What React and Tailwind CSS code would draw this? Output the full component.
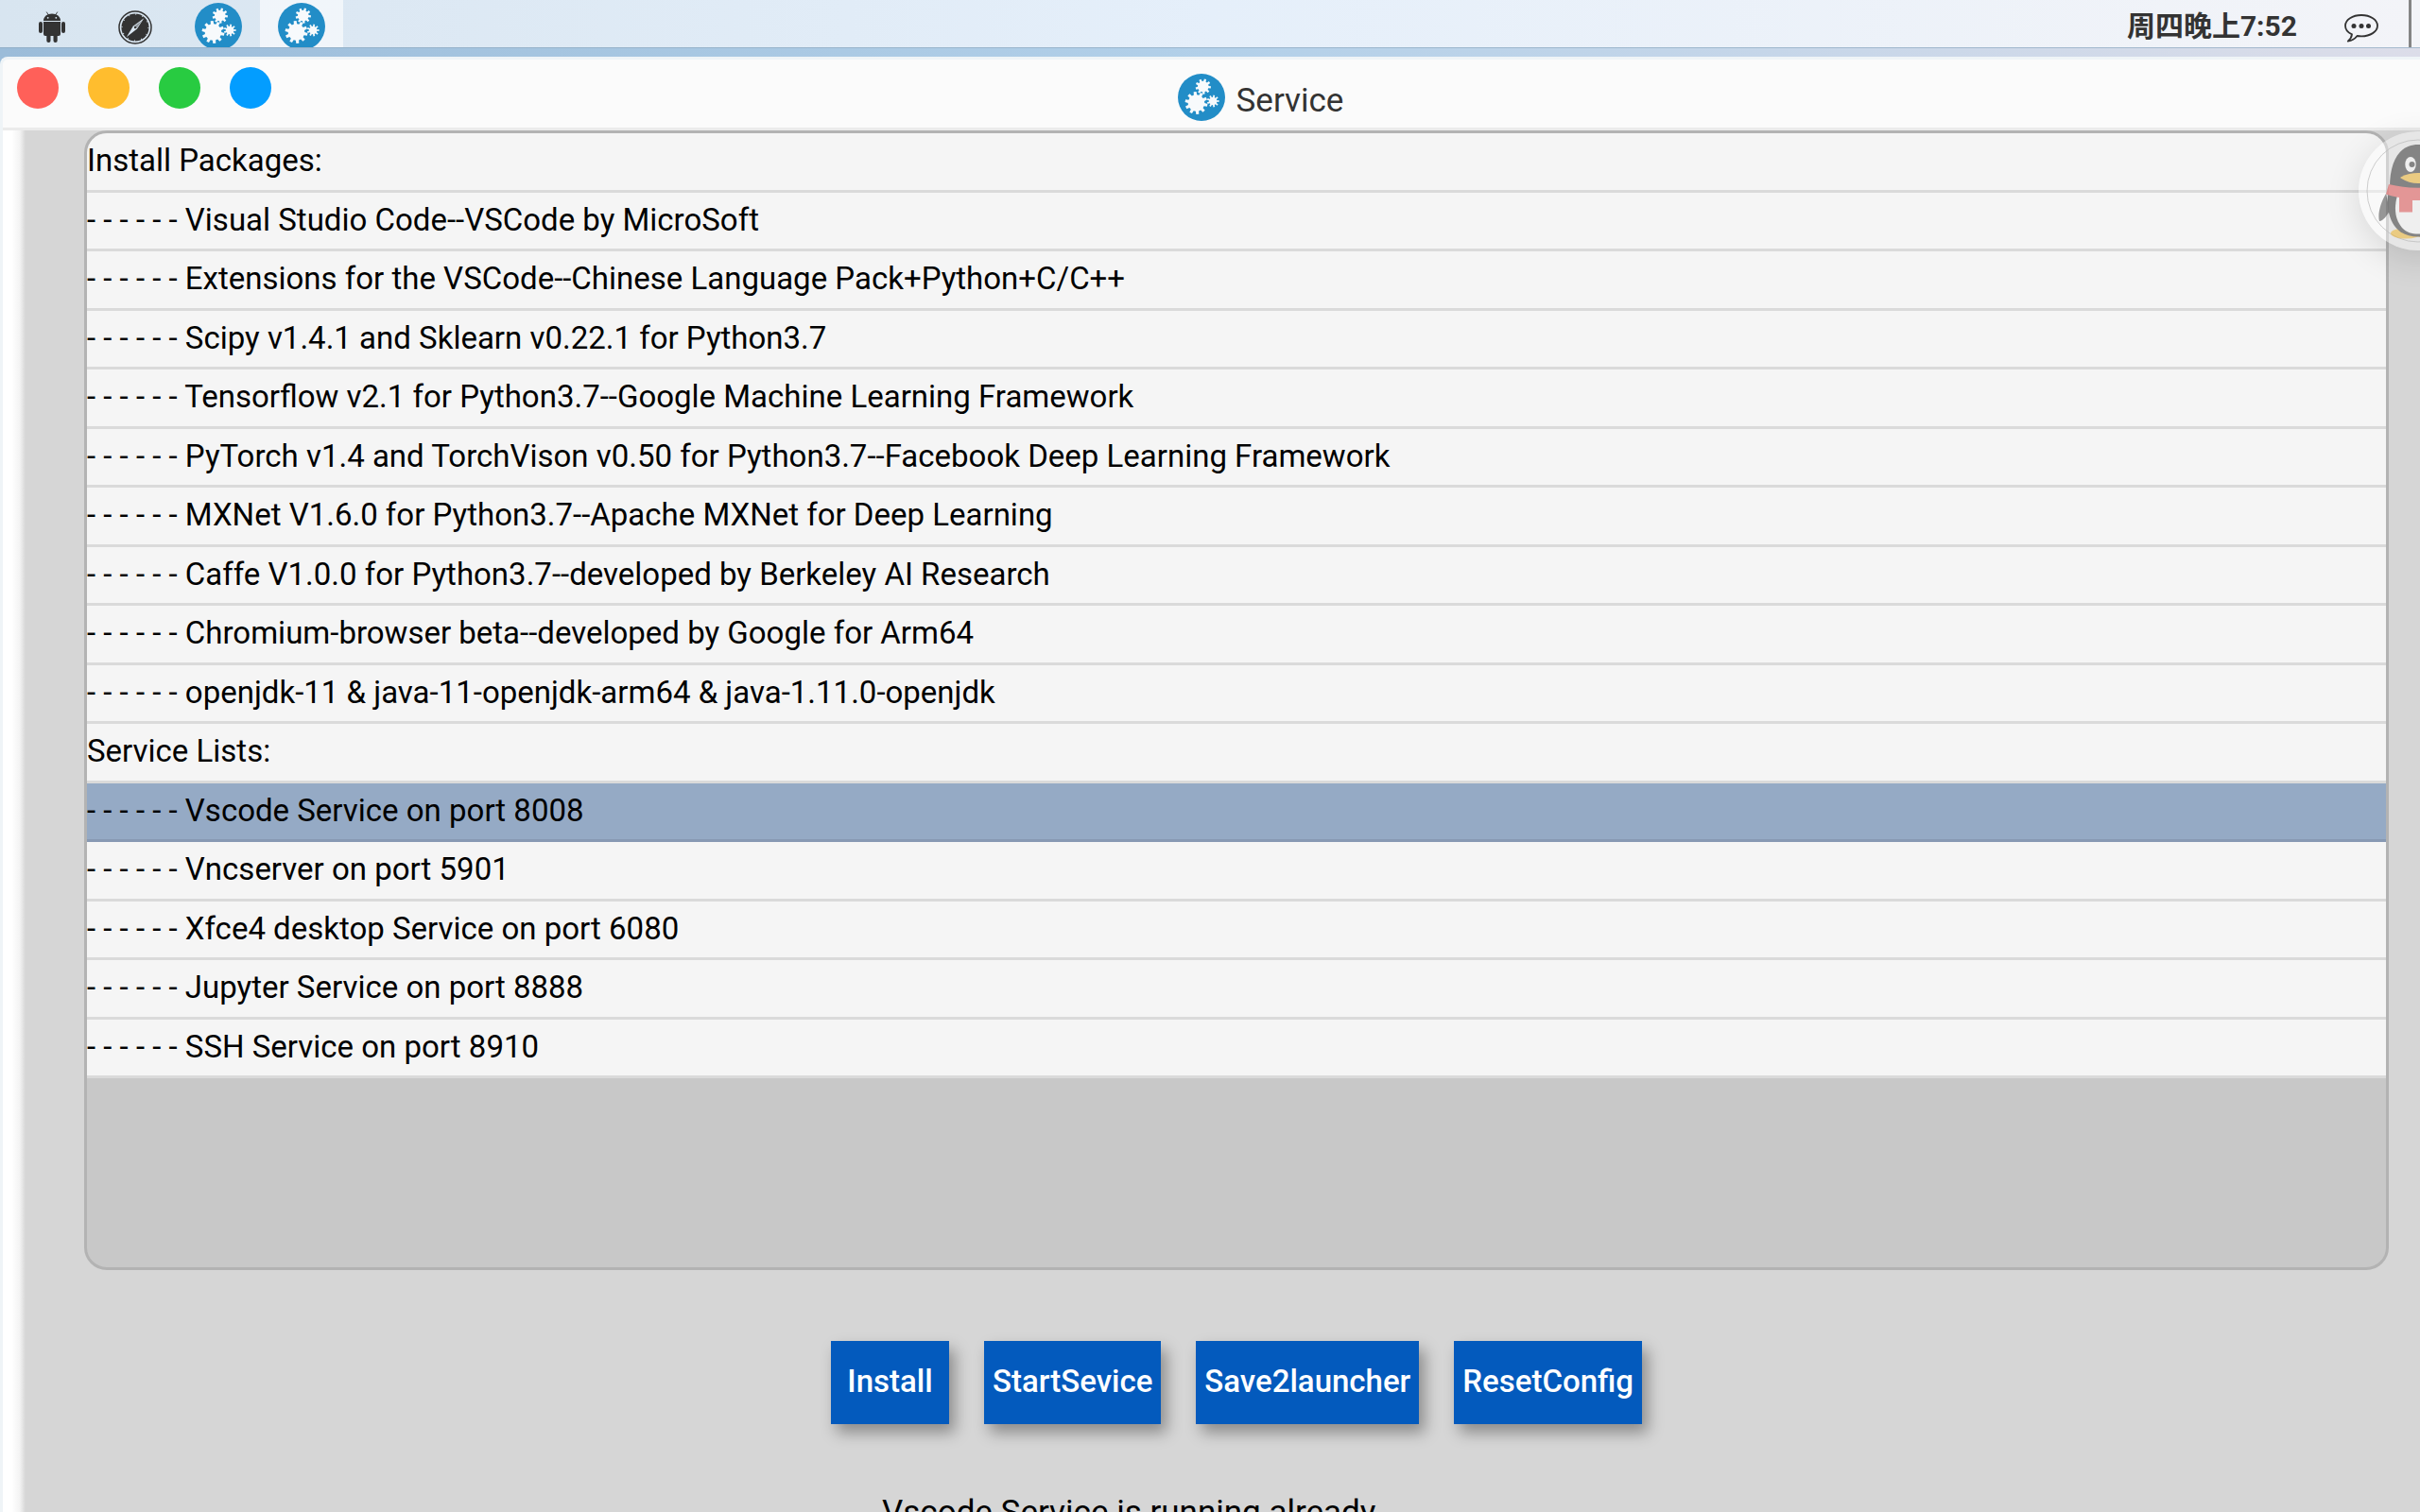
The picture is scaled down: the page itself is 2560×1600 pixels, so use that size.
const packages = [
  'Install Packages:',
  '- - - - - - Visual Studio Code--VSCode by MicroSoft',
  '- - - - - - Extensions for the VSCode--Chinese Language Pack+Python+C/C++',
  '- - - - - - Scipy v1.4.1 and Sklearn v0.22.1 for Python3.7',
  '- - - - - - Tensorflow v2.1 for Python3.7--Google Machine Learning Framework',
  '- - - - - - PyTorch v1.4 and TorchVison v0.50 for Python3.7--Facebook Deep Learning Framework',
  '- - - - - - MXNet V1.6.0 for Python3.7--Apache MXNet for Deep Learning',
  '- - - - - - Caffe V1.0.0 for Python3.7--developed by Berkeley AI Research',
  '- - - - - - Chromium-browser beta--developed by Google for Arm64',
  '- - - - - - openjdk-11 & java-11-openjdk-arm64 & java-1.11.0-openjdk',
  'Service Lists:',
  '- - - - - - Vscode Service on port 8008',
  '- - - - - - Vncserver on port 5901',
  '- - - - - - Xfce4 desktop Service on port 6080',
  '- - - - - - Jupyter Service on port 8888',
  '- - - - - - SSH Service on port 8910',
];
const selected = 11;

function gearPath(cx, cy, outer, inner, teeth, turn) {
  const step = (Math.PI * 2) / teeth;
  const points = [];
  for (let i = 0; i < teeth; i++) {
    const a = i * step + turn;
    [
      [inner, -0.3],
      [outer, -0.2],
      [outer, 0.2],
      [inner, 0.3],
    ].forEach(([r, f]) => {
      points.push(`${(cx + r * Math.cos(a + f * step)).toFixed(2)} ${(cy + r * Math.sin(a + f * step)).toFixed(2)}`);
    });
  }
  return `M${points.join('L')}Z`;
}

function GearsIcon() {
  return (
    <svg viewBox="0 0 50 50" className="size-[50px] shrink-0" aria-hidden="true">
      <circle cx="25" cy="25" r="25" fill="#228dc7" />
      <g fill="#f7fafc">
        <path d={gearPath(19.5, 31, 12, 8.8, 10, 0.2)} />
        <path d={gearPath(26.8, 13.6, 8.2, 5.8, 9, 0.1)} />
        <path d={gearPath(37.2, 29, 6.4, 4.2, 9, 0)} />
      </g>
    </svg>
  );
}

function AndroidIcon() {
  return (
    <svg viewBox="0 0 28 34" className="h-[34px] w-7" fill="#333" aria-hidden="true">
      <path d="M8.2.6 10.4 4M19.8.6 17.6 4" stroke="#333" strokeWidth=".9" />
      <path d="M5 10C5 5.6 8.8 2.6 14 2.6S23 5.6 23 10Z" />
      <circle cx="9.7" cy="6.8" r=".9" fill="#dbe7f2" />
      <circle cx="18.3" cy="6.8" r=".9" fill="#dbe7f2" />
      <path d="M5 11h18v13a2 2 0 0 1-2 2H7a2 2 0 0 1-2-2Z" />
      <rect x="0" y="11" width="4" height="12" rx="2" />
      <rect x="24" y="11" width="4" height="12" rx="2" />
      <rect x="8.3" y="24" width="4.2" height="9" rx="2" />
      <rect x="15.5" y="24" width="4.2" height="9" rx="2" />
    </svg>
  );
}

function CompassIcon() {
  return (
    <svg viewBox="0 0 36 36" className="size-9" aria-hidden="true">
      <circle cx="18" cy="18" r="17" fill="none" stroke="#333" strokeWidth="1.5" />
      <circle cx="18" cy="18" r="14.6" fill="#333" />
      <circle cx="18" cy="18" r="14" fill="none" stroke="#dbe7f2" strokeWidth="1.4" strokeDasharray="0.8 6.53" />
      <path d="M27.3 8.2 20 19.6 8.8 28.2 16 16.6Z" fill="#dbe7f2" />
      <path d="M25 11 16.6 17.1 19.4 19.1Z" fill="#333" opacity=".45" />
      <circle cx="18" cy="18.1" r="1.2" fill="#333" />
    </svg>
  );
}

function ChatIcon() {
  return (
    <svg viewBox="0 0 36 30" className="h-[30px] w-9" fill="none" aria-hidden="true">
      <path
        d="M18 1C8.6 1 1 5.9 1 12.2c0 3.9 2.8 7.2 7 9.2-.3 2.8-1.7 5-4.2 7.3 4-.6 7.3-2.6 9.7-5.7 1.4.2 2.9.4 4.500.4 9.400 0 17-5 17-11.200S27.400 1 18 1Z"
        stroke="#333"
        strokeWidth="1.8"
        strokeLinejoin="round"
      />
      <circle cx="10" cy="12.500" r="2.500" fill="#333" />
      <circle cx="18" cy="12.500" r="2.500" fill="#333" />
      <circle cx="25.500" cy="12.500" r="2.500" fill="#333" />
    </svg>
  );
}

function Penguin() {
  return (
    <svg viewBox="0 0 126 126" className="size-full" aria-hidden="true">
      <circle cx="63" cy="63" r="54" fill="none" stroke="#b9b9b9" strokeWidth=".7" />
      <g opacity=".54">
        <path d="M29 66C23 76 20 88 22 95c4 0 8-6 11-11ZM97 66c6 10 9 22 7 29-4 0-8-6-11-11Z" fill="#444" />
        <ellipse cx="50" cy="108" rx="16" ry="5.500" fill="#efb52f" />
        <ellipse cx="76" cy="108" rx="16" ry="5.500" fill="#efb52f" />
        <path d="M33 60C33 30 44 14 63 14s30 16 30 46c4 12 3 28-5 40-6 8-14 11.500-25 11.500S44 108 38 100c-8-12-9-28-5-40Z" fill="#333" />
        <path d="M41 68c-4 14-2 26 5 34 5 5 10 6.500 17 6.500S75 107 80 102c7-8 9-20 5-34Z" fill="#f7f7f7" />
        <ellipse cx="55" cy="35" rx="5.700" ry="8" fill="#f7f7f7" />
        <ellipse cx="71" cy="35" rx="5.700" ry="8" fill="#f7f7f7" />
        <circle cx="56.500" cy="35" r="3" fill="#333" />
        <circle cx="69.500" cy="35" r="3" fill="#333" />
        <path d="M44 49c6-4 12-5 19-5s13 1 19 5c-6 4-12 6-19 6s-13-2-19-6Z" fill="#efb52f" />
        <path d="M32 56c20 5 42 5 62 0l3 11c-12 5-23 6-34 6h-6v12.500H43V70c-5-1-10-2-14-3.500Z" fill="#e25454" />
      </g>
    </svg>
  );
}

const tile = 'flex h-full w-[88px] justify-center';

export default function App() {
  return (
    <div className="relative flex h-screen flex-col overflow-hidden bg-linear-to-r from-[#9bbcd9] via-[#b2d0e9] to-[#dcdde9] font-['Roboto','Noto_Sans_CJK_SC',sans-serif] text-[33px] text-black">
      <header className="relative flex h-[50px] shrink-0 overflow-hidden bg-linear-to-r from-[#d8e5f0] via-[#e5effa] to-[#f3f4f8] pl-[11px]">
        <button aria-label="Android" className={`${tile} items-center pt-2`}>
          <AndroidIcon />
        </button>
        <button aria-label="Browser" className={`${tile} items-center pt-2`}>
          <CompassIcon />
        </button>
        <button aria-label="Service" className={`${tile} items-start pt-[3px]`}>
          <GearsIcon />
        </button>
        <button aria-label="Service, active" className={`${tile} items-start bg-white/60 pt-[3px]`}>
          <GearsIcon />
        </button>
        <time className="ml-auto flex items-center pt-1.5 text-[30px] leading-none font-bold text-[#333]">周四晚上7:52</time>
        <button aria-label="Messages" className="flex items-center pt-2.5 pr-8 pl-[50px]">
          <ChatIcon />
        </button>
        <div className="mr-[9px] w-[3px] bg-[#858585]" />
      </header>
      <div className="h-[10px] shrink-0 border-t border-[#8fa9c1]/70" />

      <main className="flex min-h-0 flex-1 flex-col rounded-tl-lg border-t-[3px] border-l-[3px] border-[#eff4f7] bg-[#fbfbfb]">
        <div className="flex h-[75px] shrink-0 border-b-[3px] border-[#ebebeb]">
          <div className="flex gap-[31px] pt-2 pl-[15px]">
            <button aria-label="Close" className="size-11 rounded-full bg-[#ff6059]" />
            <button aria-label="Minimize" className="size-11 rounded-full bg-[#ffbd2e]" />
            <button aria-label="Maximize" className="size-11 rounded-full bg-[#28cb41]" />
            <button aria-label="Full screen" className="size-11 rounded-full bg-[#039dff]" />
          </div>
          <div className="flex flex-1 items-center justify-center gap-3 pt-[7px] text-[#333]">
            <GearsIcon />
            <h1 className="pt-2 text-[35px] leading-10">Service</h1>
          </div>
          <div className="w-[180px]" />
        </div>

        <div className="flex min-h-0 flex-1">
          <div className="w-6 shrink-0 bg-linear-to-r from-white from-40% via-[#f3f3f3] via-75% to-[#d6d6d6]" />
          <section className="flex flex-1 flex-col items-center overflow-hidden bg-[#d6d6d6] pr-[33px] pl-[62px]">
            <div className="h-[1206px] w-full shrink-0 overflow-hidden rounded-3xl border-[3px] border-[#b3b3b3] bg-[#c8c8c8]">
              <ul className="grid min-h-[1000px] auto-rows-fr">
                {packages.map((text, i) => (
                  <li
                    key={text}
                    className={`flex border-b-[3px] ${i === selected ? 'border-[#8799b3] bg-[#95aac5]' : 'border-[#dadada] bg-[#f5f5f5]'}`}
                  >
                    <button className="flex-1 pb-px text-left leading-10 whitespace-pre">{text}</button>
                  </li>
                ))}
              </ul>
            </div>
            <div className="mt-[75px] flex shrink-0 gap-[37px] font-medium text-white">
              {['Install', 'StartSevice', 'Save2launcher', 'ResetConfig'].map((label) => (
                <button key={label} className="h-[88px] min-w-[125px] bg-[#035abd] px-[9px] pb-0.5 shadow-[6px_9px_15px_rgba(0,0,0,0.35)]">
                  {label}
                </button>
              ))}
            </div>
            <p className="mt-[74px] w-[750px] shrink-0 text-[35px] leading-10">Vscode Service is running already</p>
          </section>
        </div>
      </main>

      <button
        aria-label="QQ"
        className="absolute top-[139px] -right-[61px] size-[126px] rounded-full bg-white/40 shadow-[0_9px_36px_rgba(0,0,0,0.12)]"
      >
        <Penguin />
      </button>
    </div>
  );
}
